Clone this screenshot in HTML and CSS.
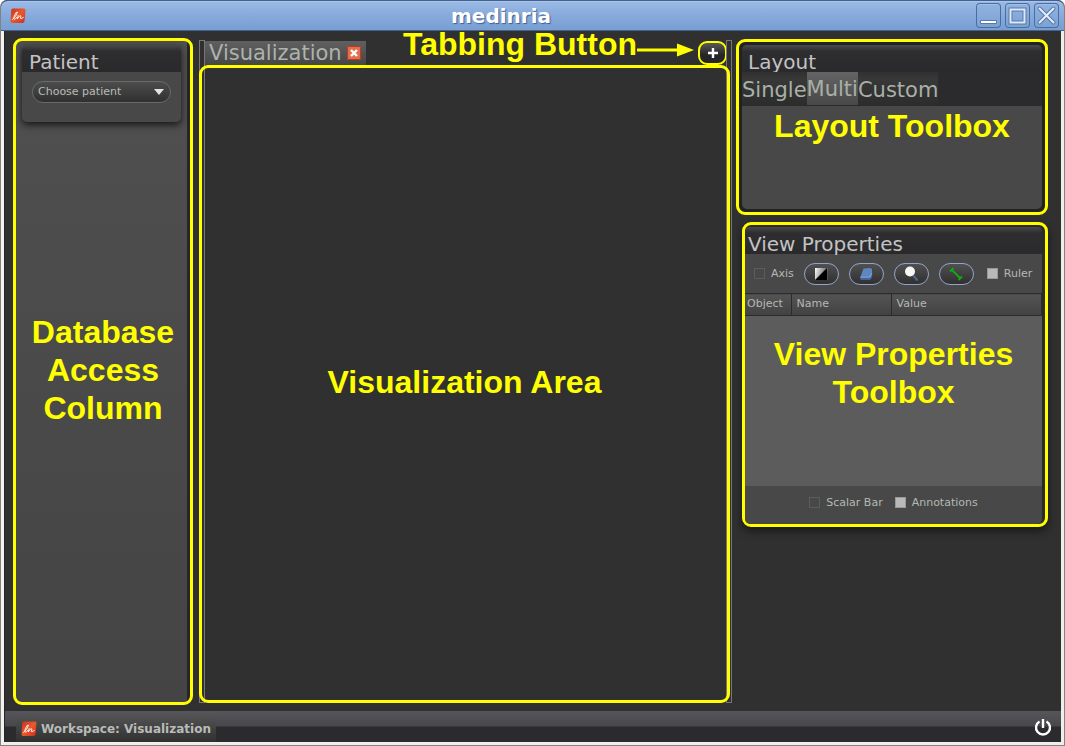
FILE: index.html
```html
<!DOCTYPE html>
<html lang="en">
<head>
<meta charset="utf-8">
<title>medinria</title>
<link rel="stylesheet" href="styles.css">
</head>
<body>
<svg class="defs" width="0" height="0" aria-hidden="true">
  <defs>
    <linearGradient id="red" x1="0" y1="0" x2="1" y2="1">
      <stop offset="0" stop-color="#c83024"/><stop offset="0.5" stop-color="#ea5a2c"/><stop offset="1" stop-color="#cc2a20"/>
    </linearGradient>
    <linearGradient id="shade" x1="0" y1="0" x2="1" y2="0.3">
      <stop offset="0" stop-color="#fff"/><stop offset="1" stop-color="#555"/>
    </linearGradient>
    <symbol id="logo" viewBox="0 0 16 16">
      <path d="M3 .5h11q1.700 0 1.500 1.700l-1 11q-.2 1.800-2 1.800H2Q.3 15 .5 13.200l.7-11Q1.300.500 3 .500z" fill="url(#red)"/>
      <path d="M2.500 11.500Q6.500 8 7.500 4.200 6.500 3.200 5 6.500 3 11 4.300 11.200 5.500 11 6.800 9.500" fill="none" stroke="#fff" stroke-width=".9" stroke-linecap="round"/>
      <path d="M8.200 7.500L7.200 11Q9.500 7.400 10.700 7.700 11.200 8.200 10.300 10.300 10.300 11.500 13.300 9.500" fill="none" stroke="#fff" stroke-width=".9" stroke-linecap="round"/>
    </symbol>
  </defs>
</svg>
<div class="window">
  <header class="titlebar">
    <svg class="logo" aria-hidden="true"><use href="#logo"/></svg>
    <h1 class="title">medinria</h1>
    <div class="controls">
      <button class="control" aria-label="Minimize"><svg width="25" height="25" viewBox="0 0 25 25"><path d="M4.500 17.500h16v3h-16z" fill="#fff" stroke="#5679aa"/></svg></button>
      <button class="control" aria-label="Maximize"><svg width="25" height="25" viewBox="0 0 25 25"><path d="M5.500 6.500h14v13h-14z" fill="none" stroke="#5679aa" stroke-width="4"/><path d="M5.500 6.500h14v13h-14z" fill="none" stroke="#dfeaf8" stroke-width="2"/></svg></button>
      <button class="control" aria-label="Close"><svg width="25" height="25" viewBox="0 0 25 25"><path d="M5.500 5.500l14 14m0-14l-14 14" stroke="#5679aa" stroke-width="4" stroke-linecap="round"/><path d="M5.500 5.500l14 14m0-14l-14 14" stroke="#e6eefa" stroke-width="2" stroke-linecap="round"/></svg></button>
    </div>
  </header>

  <main class="workspace">
    <aside class="database framed">
      <section class="toolbox patient">
        <h2 class="toolbox-title">Patient</h2>
        <div class="picker">
          <select class="picker-select" aria-label="Patient"><option>Choose patient</option></select>
        </div>
      </section>
      <p class="note database-note">Database<br>Access<br>Column</p>
    </aside>

    <section class="center">
      <div class="tabrow">
        <div class="tab">Visualization
          <button class="tab-close" aria-label="Close tab"><svg width="14" height="14" viewBox="0 0 14 14"><path d="M4 4l6 6m0-6l-6 6" stroke="#fff" stroke-width="2.400"/></svg></button>
        </div>
        <span class="note tab-note">Tabbing Button</span>
        <svg class="arrow" width="57" height="14" viewBox="0 0 57 14" aria-hidden="true"><path d="M0 5.500h40v-5l17 6.500-17 6.500v-5H0z" fill="#ff0"/></svg>
        <button class="add" aria-label="Add tab"><svg width="12" height="12" viewBox="0 0 12 12"><path d="M6 1v10M1 6h10" stroke="#fff" stroke-width="2.400"/></svg></button>
      </div>
      <div class="view framed"><p class="note">Visualization Area</p></div>
    </section>

    <aside class="right">
      <section class="layout framed">
        <div class="toolbox layout-box">
          <h2 class="toolbox-title layout-title">Layout</h2>
          <nav class="layout-tabs">
            <button class="layout-tab">Single</button>
            <button class="layout-tab active">Multi</button>
            <button class="layout-tab">Custom</button>
          </nav>
          <p class="note layout-note">Layout Toolbox</p>
        </div>
      </section>

      <section class="properties framed">
        <div class="toolbox properties-box">
          <h2 class="toolbox-title properties-title">View Properties</h2>
          <div class="tools">
            <label class="check"><input type="checkbox">Axis</label>
            <button class="tool" aria-label="Windowing"><svg width="15" height="14" viewBox="0 0 15 14"><path d="M1 1h13v12H1z" fill="url(#shade)"/><path d="M13 1v12H1z" fill="#000"/></svg></button>
            <button class="tool" aria-label="Slicing"><svg width="15" height="14" viewBox="0 0 15 14"><path d="M4.500 1.500l7-.5 1.500 1v8l-2 2.500H2.500L1 11z" fill="#5f86bd"/><path d="M1 10.500h10L13 7v3.500l-2 2.500H2.500L1 12z" fill="#3f639b"/><path d="M1.500 10.200h9.500L13 6" fill="none" stroke="#8fb0dc" stroke-width=".8"/></svg></button>
            <button class="tool" aria-label="Zoom"><svg width="15" height="16" viewBox="0 0 15 16"><path d="M9 9l4.500 5.500" stroke="#56668a" stroke-width="2"/><circle cx="6" cy="5.500" r="5" fill="#f7f7f5"/></svg></button>
            <button class="tool" aria-label="Measure"><svg width="14" height="14" viewBox="0 0 14 14"><path d="M3 3l8 8M1 4.500l3.500-3.500M9.500 13l3.500-3.500" fill="none" stroke="#12a818" stroke-width="1.800"/></svg></button>
            <label class="check ruler"><input type="checkbox" checked>Ruler</label>
          </div>
          <table class="objects">
            <thead><tr><th class="col-object">Object</th><th class="col-name">Name</th><th>Value</th></tr></thead>
          </table>
          <p class="note properties-note">View Properties<br>Toolbox</p>
          <div class="options">
            <label class="check"><input type="checkbox">Scalar Bar</label>
            <label class="check"><input type="checkbox" checked>Annotations</label>
          </div>
        </div>
      </section>
    </aside>
  </main>

  <footer class="statusbar">
    <button class="workspace-button"><svg class="logo" aria-hidden="true"><use href="#logo"/></svg>Workspace: Visualization</button>
    <button class="power" aria-label="Quit"><svg width="18" height="18" viewBox="0 0 18 18"><path d="M5.500 3.500a7 7 0 1 0 7 0M9 1v9" fill="none" stroke="#fff" stroke-width="2.400"/></svg></button>
  </footer>
</div>
</body>
</html>
```
FILE: styles.css
```css
* { box-sizing: border-box; }
body {
  margin: 0;
  background: #fff;
  color: #b4b8b4;
  font: 11px/14px "DejaVu Sans", sans-serif;
}
h1, h2, p { margin: 0; font-weight: normal; }
button, select, input { margin: 0; padding: 0; border: 0; background: none; color: inherit; font: inherit; }
svg { display: block; }
.defs { position: absolute; }

.window {
  display: flex;
  flex-direction: column;
  min-height: 100vh;
  border: 1px solid #85817f;
  border-top: 0;
  border-radius: 7px 7px 0 0;
  overflow: hidden;
  background: #303030;
}

.titlebar {
  display: flex;
  align-items: center;
  height: 31px;
  padding: 0 5px 0 9px;
  border: 1px solid #46618c;
  border-width: 1px 0;
  border-radius: 7px 7px 0 0;
  background: linear-gradient(#9cbbe6, #86aadb 50%, #789fd2);
  box-shadow: inset 0 1px #a9c5eb;
}
.logo { width: 16px; height: 16px; }
.title {
  flex: 1;
  color: #fff;
  font-size: 20px;
  font-weight: bold;
  line-height: 28px;
  text-align: center;
  text-shadow: 1px 1px 1px #3c5f94;
}
.controls { display: flex; gap: 4px; }
.control {
  width: 25px;
  height: 25px;
  border-radius: 4px;
  background: linear-gradient(#92b3e0, #7ba1d4);
  box-shadow: inset 0 0 0 1px #4a6d9f, inset 1px 2px #a1bfe8;
}

.workspace {
  display: flex;
  flex: 1;
  gap: 6px;
  padding: 0 13px 6px 9px;
}
.workspace, .statusbar { border-left: 3px solid #f4f2f0; border-right: 3px solid #f0eeec; box-shadow: inset 1px 0 #242424; }
.framed { border: 3px solid #ff0; border-radius: 9px; }
.note {
  color: #ff0;
  font: bold 32px/38px "Liberation Sans", Arial, sans-serif;
  text-align: center;
}

.toolbox { border-radius: 5px; background: #484848; }
.toolbox-title {
  height: 27px;
  padding: 5px 7px 0;
  border-radius: 5px 5px 0 0;
  background: linear-gradient(#49494b, #2e2e30 6px, #2a2a2c);
  color: #c3c3c3;
  font-size: 20px;
  line-height: 25px;
}

.database {
  display: flex;
  flex-direction: column;
  width: 180px;
  margin-top: 7px;
  padding: 4px 9px 0 6px;
  background: linear-gradient(#505050, #444) no-repeat left / calc(100% - 3px) 100%, #262626;
}
.patient { height: 77px; box-shadow: 0 3px 7px #181818; }
.picker { position: relative; margin: 9px 10px 0; }
.picker-select {
  width: 100%;
  height: 22px;
  padding: 0 20px 0 5px;
  border: 1px solid #696969;
  border-radius: 11px;
  background: linear-gradient(#4c4c4c, #303030);
  color: #b8bcb8;
  appearance: none;
}
.picker::after {
  content: "";
  position: absolute;
  top: 8px;
  right: 7px;
  border: 5px solid transparent;
  border-top: 6px solid #e4e4e4;
  border-bottom: 0;
}
.database-note { margin: auto -7px auto -4px; padding-bottom: 85px; }

.center { position: relative; display: flex; flex: 1; flex-direction: column; padding-bottom: 2px; }
.center::before, .center::after {
  content: "";
  position: absolute;
  top: 9px;
  bottom: 2px;
  width: 4px;
  border: 1px solid #777;
}
.center::before { left: 0; }
.center::after { right: -2px; }
.tabrow { display: flex; align-items: flex-end; height: 34px; padding: 0 3px 0 5px; }
.tab {
  display: flex;
  align-items: center;
  gap: 5px;
  height: 24px;
  padding: 0 5px;
  background: linear-gradient(#606060, #464646);
  color: #adb2ad;
  font-size: 21px;
  line-height: 24px;
}
.tab-close { border-radius: 2px; background: #e2704c; box-shadow: inset 0 0 0 1px #b73b28; }
.tab-note { align-self: flex-start; margin-left: auto; line-height: 26px; white-space: nowrap; }
.arrow { align-self: center; margin: 4px 4px 0 0; }
.add {
  display: grid;
  place-items: center;
  width: 29px;
  height: 24px;
  border: 2px solid #ff0;
  border-radius: 9px;
  background: linear-gradient(#585858, #262626 60%);
}
.view { position: relative; z-index: 1; display: grid; flex: 1; place-items: center; padding-bottom: 4px; }

.right { width: 312px; padding-top: 8px; }
.layout { position: relative; z-index: 1; padding: 3px; background: #222; }
.layout-box { min-height: 164px; }
.layout-title { padding-left: 6px; }
.layout-tabs { display: flex; height: 34px; background: #2b2b2d; }
.layout-tab {
  height: 33px;
  padding-top: 2px;
  background: linear-gradient(#303030, #383838 20%, #2c2c2c);
  color: #a8b0a8;
  font-size: 21px;
  line-height: 24px;
}
.layout-tab.active { padding-top: 0; background: linear-gradient(#646464, #484848); }
.layout-note { padding-top: 1px; }

.properties { margin: 7px 0 0 6px; padding: 2px 3px 0 0; background: #2a2a2a; box-shadow: 0 4px 8px #181818; }
.properties-title { padding-left: 3px; }
.tools { display: flex; align-items: center; gap: 10px; height: 39px; padding: 0 9px; }
.check { display: flex; align-items: center; gap: 6px; white-space: nowrap; }
.ruler { margin-left: 3px; }
.check input {
  width: 11px;
  height: 11px;
  border: 1px solid #5c5c5c;
  appearance: none;
}
.check input:checked { border: 1px solid #999; background: #b9b9b9; }
.tool {
  display: grid;
  place-items: center;
  width: 35px;
  height: 22px;
  border: 1px solid #92a4cc;
  border-radius: 11px;
  background: linear-gradient(#505050, #303030);
}
.objects { width: 100%; table-layout: fixed; border-collapse: collapse; }
.objects th {
  height: 22px;
  padding: 0 5px 1px;
  border: 1px solid #2c2c2c;
  background: linear-gradient(#545454, #424242);
  font-weight: normal;
  text-align: left;
}
.objects .col-object { width: 46px; padding: 0 2px 1px; border-left: 0; }
.objects .col-name { width: 100px; }
.properties-note { min-height: 170px; padding-top: 19px; background: #5c5c5c; }
.options { display: flex; align-items: center; justify-content: center; gap: 12px; height: 38px; padding-bottom: 5px; }

.statusbar {
  display: flex;
  align-items: center;
  justify-content: space-between;
  height: 34px;
  padding: 0 9px 0 12px;
  border-bottom: 3px solid #f0eeec;
  background: linear-gradient(#56565a, #48484c 15px, #2b2b2d 16px, #2b2b2d);
}
.workspace-button {
  display: flex;
  align-items: center;
  align-self: flex-end;
  gap: 4px;
  height: 26px;
  padding: 0 5px;
  background: linear-gradient(#525252, #303030);
  color: #b8bcb8;
  font-size: 12px;
  font-weight: bold;
}
```
